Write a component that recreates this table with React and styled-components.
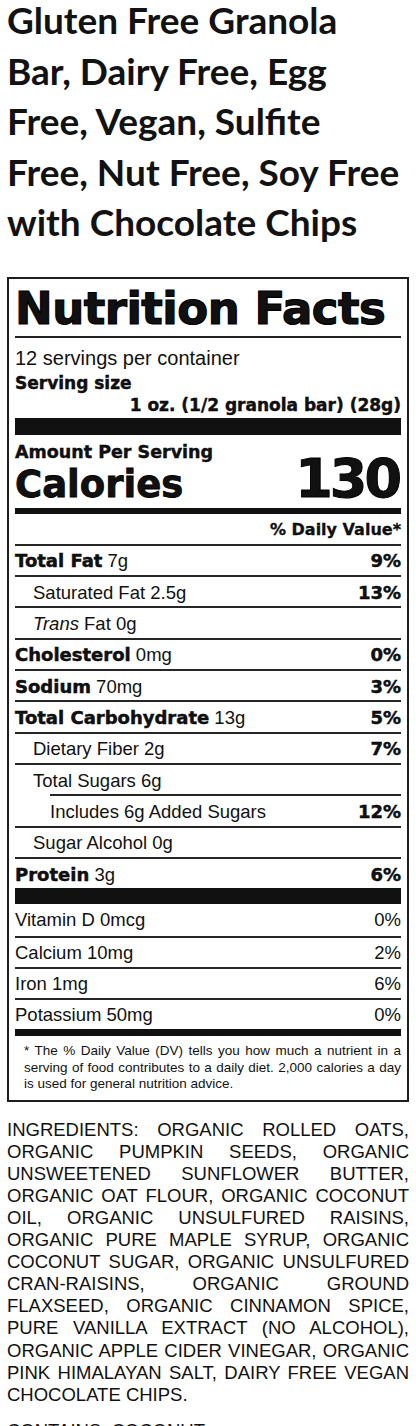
import styled, { createGlobalStyle } from "styled-components"

const GlobalStyle = createGlobalStyle`
    body {
        margin: 0;
        background: #fff;
        color: #111;
    }
    * {
        box-sizing: border-box;
    }
`

const nutrients = [
    { name: "Total Fat", amount: "7g", dv: "9%", level: 0 },
    { name: "Saturated Fat", amount: "2.5g", dv: "13%", level: 1 },
    { name: "Trans", amount: "Fat 0g", dv: "", level: 1, italic: true },
    { name: "Cholesterol", amount: "0mg", dv: "0%", level: 0 },
    { name: "Sodium", amount: "70mg", dv: "3%", level: 0 },
    { name: "Total Carbohydrate", amount: "13g", dv: "5%", level: 0 },
    { name: "Dietary Fiber", amount: "2g", dv: "7%", level: 1 },
    { name: "Total Sugars", amount: "6g", dv: "", level: 1 },
    { name: "Includes 6g Added Sugars", amount: "", dv: "12%", level: 2 },
    { name: "Sugar Alcohol", amount: "0g", dv: "", level: 1 },
    { name: "Protein", amount: "3g", dv: "6%", level: 0 },
]

const vitamins = [
    { name: "Vitamin D 0mcg", dv: "0%" },
    { name: "Calcium 10mg", dv: "2%" },
    { name: "Iron 1mg", dv: "6%" },
    { name: "Potassium 50mg", dv: "0%" },
]

const App = () => {
    return (
        <Page>
            <GlobalStyle />
            <Title>
                Gluten Free Granola Bar, Dairy Free, Egg Free, Vegan, Sulfite Free, Nut Free, Soy Free with Chocolate Chips
            </Title>

            <Label>
                <Heading>Nutrition Facts</Heading>
                <Servings>12 servings per container</Servings>
                <ServingSize>Serving size</ServingSize>
                <ServingValue>1 oz. (1/2 granola bar) (28g)</ServingValue>
                <Bar h={17} top={2} />
                <AmountPer>Amount Per Serving</AmountPer>
                <CaloriesRow>
                    <span className="label">Calories</span>
                    <span className="value">130</span>
                </CaloriesRow>
                <Bar h={6} top={3} />
                <DailyValue>% Daily Value*</DailyValue>

                {nutrients.map((n) => (
                    <Row key={n.name} level={n.level}>
                        <span>
                            {n.level === 0 ? (
                                <Bold>{n.name}</Bold>
                            ) : n.italic ? (
                                <Plain><i>{n.name}</i></Plain>
                            ) : (
                                <Plain>{n.name}</Plain>
                            )}
                            {n.amount && <Plain> {n.amount}</Plain>}
                        </span>
                        <Bold>{n.dv}</Bold>
                    </Row>
                ))}

                <Bar h={16} top={0} />
                {vitamins.map((v) => (
                    <VitaminRow key={v.name}>
                        <span>{v.name}</span>
                        <span>{v.dv}</span>
                    </VitaminRow>
                ))}
                <Bar h={7} top={0} />
                <Footnote>
                    * The % Daily Value (DV) tells you how much a nutrient in a serving of food contributes to a daily diet. 2,000 calories a day is used for general nutrition advice.
                </Footnote>
            </Label>

            <Ingredients>
                INGREDIENTS: ORGANIC ROLLED OATS, ORGANIC PUMPKIN SEEDS, ORGANIC UNSWEETENED SUNFLOWER BUTTER, ORGANIC OAT FLOUR, ORGANIC COCONUT OIL, ORGANIC UNSULFURED RAISINS, ORGANIC PURE MAPLE SYRUP, ORGANIC COCONUT SUGAR, ORGANIC UNSULFURED CRAN-RAISINS, ORGANIC GROUND FLAXSEED, ORGANIC CINNAMON SPICE, PURE VANILLA EXTRACT (NO ALCOHOL), ORGANIC APPLE CIDER VINEGAR, ORGANIC PINK HIMALAYAN SALT, DAIRY FREE VEGAN CHOCOLATE CHIPS.
            </Ingredients>
            <Contains>CONTAINS: COCONUT.</Contains>
        </Page>
    )
}
export default App

const heavy = `"DejaVu Sans", "Liberation Sans", sans-serif`
const plain = `"Liberation Sans", Arial, sans-serif`

const Page = styled.div`
    width: 416px;
    padding: 0 7px;
`
const Title = styled.h1`
    margin: -5px 0 0 0;
    font-family: Lato, "Open Sans", sans-serif;
    font-weight: 700;
    font-size: 37px;
    line-height: 50.5px;
    color: #121212;
`
const Label = styled.section`
    margin-top: 29px;
    border: 2px solid #1e1e1e;
    padding: 0 6px 7px;
`
const Heading = styled.h2`
    margin: 0;
    padding-top: 2px;
    font-family: ${heavy};
    font-weight: 700;
    font-size: 45px;
    line-height: 55px;
    letter-spacing: -0.5px;
    white-space: nowrap;
    -webkit-text-stroke: 1.2px #000;
    border-bottom: 2px solid #222;
`
const Servings = styled.div`
    margin-top: 9px;
    font-family: ${plain};
    font-size: 20px;
    line-height: 22px;
`
const ServingSize = styled.div`
    margin-top: 4px;
    font-family: ${heavy};
    font-weight: 700;
    font-size: 17px;
    line-height: 20px;
    -webkit-text-stroke: 0.4px #000;
`
const ServingValue = styled.div`
    padding-top: 1px;
    font-family: ${heavy};
    font-weight: 700;
    font-size: 17px;
    line-height: 22px;
    text-align: right;
    -webkit-text-stroke: 0.4px #000;
`
const Bar = styled.div`
    height: ${(p) => p.h}px;
    margin-top: ${(p) => p.top}px;
    background: #111;
`
const AmountPer = styled.div`
    margin-top: 7px;
    font-family: ${heavy};
    font-weight: 700;
    font-size: 17.5px;
    line-height: 20px;
    -webkit-text-stroke: 0.4px #000;
`
const CaloriesRow = styled.div`
    display: flex;
    justify-content: space-between;
    align-items: baseline;
    margin-top: -3px;
    font-family: ${heavy};
    font-weight: 700;
    line-height: 40px;

    .label {
        font-size: 37px;
        -webkit-text-stroke: 0.8px #000;
    }
    .value {
        font-size: 54px;
        letter-spacing: -3px;
        margin-right: 2px;
        -webkit-text-stroke: 1px #000;
    }
`
const DailyValue = styled.div`
    margin-top: 6px;
    margin-bottom: 4px;
    font-family: ${heavy};
    font-weight: 700;
    font-size: 16px;
    line-height: 20px;
    text-align: right;
    -webkit-text-stroke: 0.3px #000;
`
const Row = styled.div`
    display: flex;
    justify-content: space-between;
    align-items: center;
    height: 31.35px;
    padding-top: 2px;
    margin-left: ${(p) => (p.level === 2 ? 35 : 0)}px;
    padding-left: ${(p) => (p.level === 1 ? 18 : 0)}px;
    border-top: 2px solid #262626;
    font-family: ${heavy};
    font-size: 18px;
    line-height: 22px;
    white-space: nowrap;
`
const Bold = styled.span`
    font-family: ${heavy};
    font-weight: 700;
    font-size: 18px;
    -webkit-text-stroke: 0.45px #000;
`
const Plain = styled.span`
    font-family: ${plain};
    font-weight: 400;
    font-size: 18.5px;
    -webkit-text-stroke: 0;
`
const VitaminRow = styled.div`
    display: flex;
    justify-content: space-between;
    align-items: center;
    height: 31.25px;
    padding-top: 1px;
    font-family: ${plain};
    font-size: 18.5px;
    line-height: 22px;

    & + & {
        border-top: 2px solid #262626;
    }
`
const Footnote = styled.p`
    margin: 7px 0 0 0;
    padding-left: 9px;
    font-family: ${plain};
    font-size: 13.5px;
    line-height: 16.5px;
    text-align: justify;
`
const Ingredients = styled.p`
    margin: 17px 0 0 0;
    font-family: ${plain};
    font-size: 18.5px;
    line-height: 22.08px;
    text-align: justify;
    color: #111;
`
const Contains = styled.p`
    margin: 14px 0 0 0;
    font-family: ${plain};
    font-size: 18.5px;
    line-height: 22px;
    color: #111;
`
